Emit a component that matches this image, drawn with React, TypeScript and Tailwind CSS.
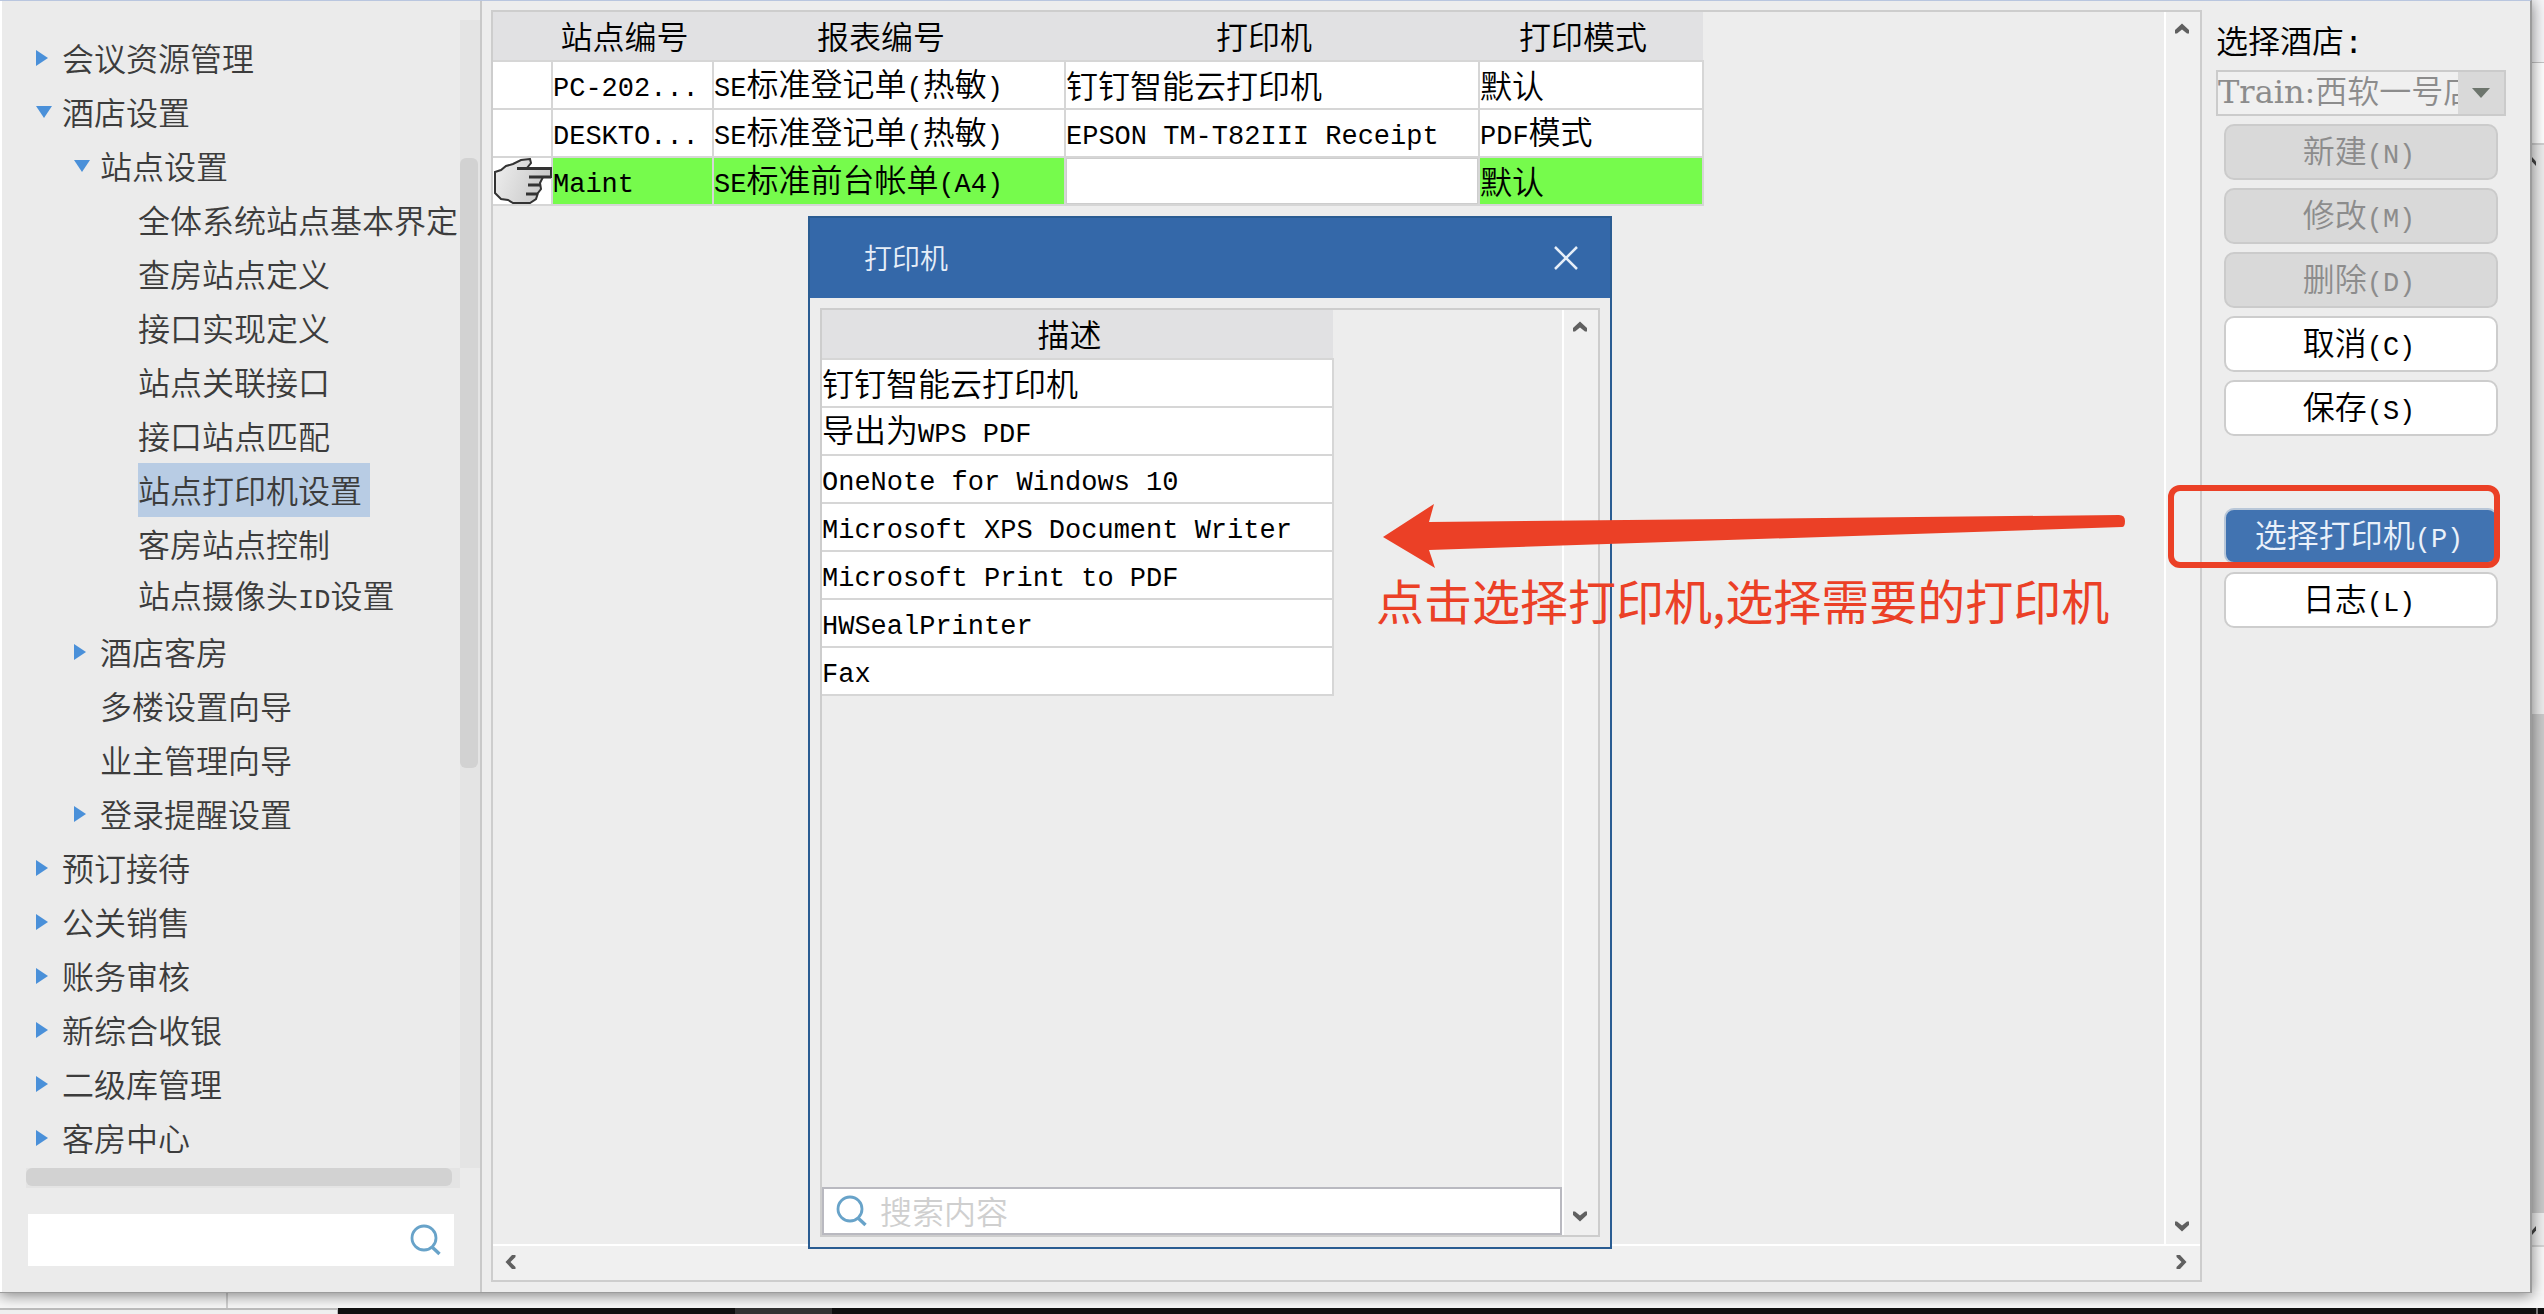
import { useState } from "react";
import type { ReactNode } from "react";

type Node = { label: string; level: 0 | 1 | 2; state?: "open" | "closed" };

const tree: Node[] = [
  { label: "会议资源管理", level: 0, state: "closed" },
  { label: "酒店设置", level: 0, state: "open" },
  { label: "站点设置", level: 1, state: "open" },
  { label: "全体系统站点基本界定", level: 2 },
  { label: "查房站点定义", level: 2 },
  { label: "接口实现定义", level: 2 },
  { label: "站点关联接口", level: 2 },
  { label: "接口站点匹配", level: 2 },
  { label: "站点打印机设置", level: 2 },
  { label: "客房站点控制", level: 2 },
  { label: "站点摄像头ID设置", level: 2 },
  { label: "酒店客房", level: 1, state: "closed" },
  { label: "多楼设置向导", level: 1 },
  { label: "业主管理向导", level: 1 },
  { label: "登录提醒设置", level: 1, state: "closed" },
  { label: "预订接待", level: 0, state: "closed" },
  { label: "公关销售", level: 0, state: "closed" },
  { label: "账务审核", level: 0, state: "closed" },
  { label: "新综合收银", level: 0, state: "closed" },
  { label: "二级库管理", level: 0, state: "closed" },
  { label: "客房中心", level: 0, state: "closed" },
];

const indent = { 0: "pl-[34px]", 1: "pl-[72px]", 2: "pl-[136px]" };

const rows = [
  ["PC-202...", "SE标准登记单(热敏)", "钉钉智能云打印机", "默认"],
  ["DESKTO...", "SE标准登记单(热敏)", "EPSON TM-T82III Receipt", "PDF模式"],
];

const printers = [
  "钉钉智能云打印机",
  "导出为WPS PDF",
  "OneNote for Windows 10",
  "Microsoft XPS Document Writer",
  "Microsoft Print to PDF",
  "HWSealPrinter",
  "Fax",
];

// Latin runs are set in a half-width mono face, Chinese at full size
function Mixed({ children }: { children: string }) {
  return (
    <>
      {children.split(/([\x20-\x7e]+)/).map((part, i) =>
        i % 2 ? (
          <span key={i} className="font-['Liberation_Mono',monospace] text-[27px]">
            {part}
          </span>
        ) : (
          part
        )
      )}
    </>
  );
}

function TreeArrow({ state }: { state?: "open" | "closed" }) {
  return (
    <svg className="w-[26px] h-4 shrink-0" viewBox="0 0 26 16" fill="#4a90d9">
      {state === "open" && <path d="M0 2h16L8 14z" />}
      {state === "closed" && <path d="M0 0v16l12-8z" />}
    </svg>
  );
}

function Chevron({ dir }: { dir: "up" | "down" | "left" | "right" }) {
  const d = {
    up: "M1 11.500V8l7-6.500 7 6.500v3.500h-2L8 7.500 3 11.500z",
    down: "M1 2.500V6l7 6.500L15 6V2.500h-2L8 6.500 3 2.500z",
    left: "M12.500 1H9L2.500 8 9 15h3.500v-2L7.500 8l5-5z",
    right: "M2.500 1H6l6.500 7L6 15H2.500v-2l5-5-5-5z",
  }[dir];
  return (
    <svg className="size-4" viewBox="0 0 16 16" fill="#606060">
      <path d={d} />
    </svg>
  );
}

function SearchIcon() {
  return (
    <svg className="size-8 shrink-0" viewBox="0 0 32 32" fill="none" stroke="#68a3c9" strokeWidth="2.800">
      <circle cx="14" cy="14" r="12" />
      <path d="M21.500 22.500l8 7.500" strokeWidth="3.400" />
    </svg>
  );
}

function HandIcon() {
  return (
    <svg className="block w-[60px] h-[46px]" viewBox="0 0 60 46">
      <defs>
        <linearGradient id="hand" x1="0" y1="0" x2="1" y2="0.300">
          <stop offset="0" stopColor="#efefef" />
          <stop offset="1" stopColor="#c9c9c9" />
        </linearGradient>
      </defs>
      <path
        d="M2 14l6-2 5-4 7-2 8-4 9-1 1 4-4 5h24v9h-8l-3 6 1 6-3 4-2 6-6 4H20l-5-3-7-1-6-6z"
        fill="url(#hand)"
        stroke="#333"
        strokeWidth="2"
      />
      <path d="M24 10.500h35M36 19h22M35 27h13M33 36h12" fill="none" stroke="#333" strokeWidth="3" />
    </svg>
  );
}

function SideButton({
  children,
  disabled,
  active,
}: {
  children: string;
  disabled?: boolean;
  active?: boolean;
}) {
  const tone = disabled
    ? "bg-[#d9d9d9] text-[#8c8c8c] border-[#cbcbcb]"
    : active
      ? "bg-[#4173b1] text-[#eaf1fa] border-[#b9c7d8]"
      : "bg-white text-black border-[#cdcdcd]";
  return (
    <button
      disabled={disabled}
      className={`h-14 mx-2 pr-1 pb-[2px] rounded-[10px] border-2 leading-none whitespace-nowrap ${tone}`}
    >
      <Mixed>{children}</Mixed>
    </button>
  );
}

function Cell({ children, className = "" }: { children?: ReactNode; className?: string }) {
  return (
    <td className={`h-12 p-0 border-2 border-[#d6d6d6] whitespace-nowrap leading-none ${className}`}>
      {children}
    </td>
  );
}

function Sidebar() {
  const [selected, setSelected] = useState("站点打印机设置");
  return (
    <aside className="w-[482px] shrink-0 flex flex-col bg-[#ebebeb] border-l-2 border-l-white border-r-2 border-r-[#c9c9c9] text-[#3c3c3c]">
      <div className="flex flex-1 min-h-0 pt-[19px]">
        <ul className="flex-1 pt-[11px] min-w-0">
          {tree.map((n) => (
            <li key={n.label} className={`flex items-center h-[54px] ${indent[n.level]}`}>
              {n.level < 2 && <TreeArrow state={n.state} />}
              <button
                onClick={() => setSelected(n.label)}
                className={`h-[54px] pb-[3px] whitespace-nowrap leading-none ${
                  selected === n.label ? "bg-[#b8cce4] pr-2" : ""
                }`}
              >
                <Mixed>{n.label}</Mixed>
              </button>
            </li>
          ))}
        </ul>
        <div className="w-5 bg-[#e4e4e4] pt-[138px]">
          <div className="w-[18px] h-[610px] rounded-md bg-[#d2d2d2]" />
        </div>
      </div>
      <div className="ml-6 mr-5 h-5 bg-[#e4e4e4]">
        <div className="w-[426px] h-[18px] rounded-md bg-[#d2d2d2]" />
      </div>
      <label className="flex items-center bg-white ml-[26px] mr-[26px] mt-[26px] mb-[26px] h-[52px] pr-3">
        <input aria-label="搜索" className="flex-1 min-w-0 h-full px-2 outline-none" />
        <SearchIcon />
      </label>
    </aside>
  );
}

function PrinterDialog() {
  return (
    <section className="absolute left-[808px] top-[215px] w-[804px] h-[1033px] flex flex-col bg-[#ededed] border-2 border-[#2a5c92]">
      <header className="flex items-center justify-between h-20 shrink-0 pl-[54px] pr-8 bg-[#3468a9] text-[#e6eef8]">
        <h2 className="text-[28px] leading-none pb-[2px]">打印机</h2>
        <button aria-label="关闭">
          <svg className="size-6" viewBox="0 0 24 24" stroke="#e6eef8" strokeWidth="2.500">
            <path d="M1 1l22 22M23 1L1 23" />
          </svg>
        </button>
      </header>
      <div className="flex flex-1 min-h-0 m-[10px] border-2 border-[#cdcdcd]">
        <div className="flex-1 flex flex-col justify-between">
          <table className="w-[512px] border-collapse table-fixed">
            <thead>
              <tr>
                <th className="h-[49px] p-0 pr-4 pb-[2px] bg-[#e1e1e3] font-[350] leading-none">描述</th>
              </tr>
            </thead>
            <tbody className="bg-white">
              {printers.map((p) => (
                <tr key={p}>
                  <Cell className="border-l-0 pb-[2px]">
                    <Mixed>{p}</Mixed>
                  </Cell>
                </tr>
              ))}
            </tbody>
          </table>
          <label className="flex items-center gap-3 h-12 pl-3 bg-white border-2 border-[#b9b9c0]">
            <SearchIcon />
            <input
              aria-label="搜索内容"
              placeholder="搜索内容"
              className="flex-1 outline-none h-full pb-[2px] leading-none placeholder:text-[#cfcfcf]"
            />
          </label>
        </div>
        <div className="w-9 flex flex-col items-center justify-between pt-[10px] pb-[10px] pr-[3px] border-l-2 border-white bg-[#f0f0f0]">
          <Chevron dir="up" />
          <Chevron dir="down" />
        </div>
      </div>
    </section>
  );
}

function StationGrid() {
  return (
    <main className="flex-1 min-w-0 flex flex-col border-2 border-[#cdcdcd] mt-[9px] mb-[10px] ml-[9px]">
      <div className="flex flex-1 min-h-0">
        <div className="flex-1">
          <table className="w-[1210px] border-collapse table-fixed">
            <colgroup>
              <col className="w-[59px]" />
              <col className="w-[161px]" />
              <col className="w-[352px]" />
              <col className="w-[414px]" />
              <col className="w-[224px]" />
            </colgroup>
            <thead className="bg-[#e1e1e3]">
              <tr>
                {["", "站点编号", "报表编号", "打印机", "打印模式"].map((h) => (
                  <th key={h} className="h-[49px] p-0 pr-4 pb-[2px] font-[350] leading-none">
                    {h}
                  </th>
                ))}
              </tr>
            </thead>
            <tbody>
              {rows.map((r) => (
                <tr key={r[0]} className="bg-white">
                  <Cell className="border-l-0" />
                  {r.map((c) => (
                    <Cell key={c} className="pb-[2px]">
                      <Mixed>{c}</Mixed>
                    </Cell>
                  ))}
                </tr>
              ))}
              <tr className="bg-[#76fb4c]">
                <Cell className="bg-white border-l-0">
                  <HandIcon />
                </Cell>
                <Cell className="pb-[2px]">
                  <Mixed>Maint</Mixed>
                </Cell>
                <Cell className="pb-[2px]">
                  <Mixed>SE标准前台帐单(A4)</Mixed>
                </Cell>
                <Cell>
                  <input
                    aria-label="打印机"
                    className="block w-full h-[46px] bg-white border border-[#cdcdcd] outline-none"
                  />
                </Cell>
                <Cell className="pb-[2px]">默认</Cell>
              </tr>
            </tbody>
          </table>
        </div>
        <div className="w-9 flex flex-col items-center justify-between pt-[10px] pb-[9px] pr-[2px] border-l-2 border-white bg-[#f0f0f0]">
          <Chevron dir="up" />
          <Chevron dir="down" />
        </div>
      </div>
      <div className="h-9 flex items-center justify-between px-[10px] pb-[2px] border-t-2 border-white bg-[#f0f0f0]">
        <Chevron dir="left" />
        <Chevron dir="right" />
      </div>
    </main>
  );
}

function Actions() {
  return (
    <div className="w-[328px] shrink-0 flex flex-col pl-[14px] pr-6 pt-[22px]">
      <label htmlFor="hotel" className="leading-none pb-[9px]">
        选择酒店<span className="font-['Liberation_Mono',monospace]">:</span>
      </label>
      <div className="flex h-[46px] mb-2 text-[#8c8c8c] border-2 border-[#cbcbcb]">
        <select
          id="hotel"
          disabled
          className="flex-1 min-w-0 pb-[2px] appearance-none opacity-100 leading-none bg-[#f0f0f0] font-['DejaVu_Serif','Noto_Sans_CJK_SC',serif]"
        >
          <option>Train:西软一号店</option>
        </select>
        <span className="w-[46px] flex items-center justify-center bg-[#d9d9d9]">
          <svg className="w-[18px] h-[10px]" viewBox="0 0 18 10" fill="#6d756d">
            <path d="M0 0h18L9 10z" />
          </svg>
        </span>
      </div>
      <div className="flex flex-col gap-2">
        <SideButton disabled>新建(N)</SideButton>
        <SideButton disabled>修改(M)</SideButton>
        <SideButton disabled>删除(D)</SideButton>
        <SideButton>取消(C)</SideButton>
        <SideButton>保存(S)</SideButton>
      </div>
      <div className="flex flex-col gap-2 mt-[72px]">
        <SideButton active>选择打印机(P)</SideButton>
        <SideButton>日志(L)</SideButton>
      </div>
    </div>
  );
}

function Annotation() {
  return (
    <>
      <svg className="absolute left-[1380px] top-[500px] w-[750px] h-[70px]" viewBox="0 0 750 70" fill="#eb4026">
        <path d="M3 36L54 3l-5 18 690-7q6 0 6 6t-3 6L49 49l6 18z" />
      </svg>
      <p className="absolute left-[1376px] top-[571px] text-[48px] leading-[54px] font-normal whitespace-nowrap text-[#eb4026]">
        点击选择打印机,选择需要的打印机
      </p>
      <div className="absolute left-[2168px] top-[484px] w-[332px] h-[83px] rounded-[12px] border-[6px] border-[#eb4026]" />
    </>
  );
}

export default function App() {
  return (
    <div className="h-screen overflow-hidden flex flex-col bg-[#f8f8f8] text-[32px] text-black font-['Noto_Sans_CJK_SC',sans-serif] font-[350]">
      <div className="flex flex-1 min-h-0">
        <div className="relative z-10 flex flex-1 min-w-0 bg-[#ededed] border-t border-t-[#b9c6df] border-r-2 border-r-[#9c9c9c] border-b border-b-[#9c9c9c] shadow-[0_2px_14px_rgba(0,0,0,0.5)]">
          <Sidebar />
          <StationGrid />
          <Actions />
          <PrinterDialog />
          <Annotation />
        </div>
        {/* the window behind */}
        <div className="w-3 shrink-0 flex flex-col">
          <div className="h-[63px] bg-[#f6f6f8] border-b border-[#c4c4c4]" />
          <div className="h-[82px] bg-white border-b-2 border-[#d0d0d0]" />
          <div className="h-[569px] pt-3 bg-[#ededed]">
            <svg className="block w-1 h-3" viewBox="0 0 4 12" stroke="#444" strokeWidth="3">
              <path d="M-2 0l8 9" />
            </svg>
          </div>
          <div className="flex-1 bg-[#cbcbcb]" />
          <div className="h-[34px] pt-3 bg-[#f0f0f0] border-b-2 border-[#d6d6d6]">
            <svg className="block w-1 h-3" viewBox="0 0 4 12" stroke="#444" strokeWidth="3">
              <path d="M-2 10l8-9" />
            </svg>
          </div>
          <div className="h-[46px] bg-[#fafafa]" />
        </div>
      </div>
      <div className="flex h-[15px] shrink-0">
        <div className="w-[228px] border-r-2 border-[#d0d0d0]" />
      </div>
      <footer className="flex h-[6px] shrink-0 bg-[#101010]">
        <div className="w-[338px] bg-[#f0f0f0] border-t-2 border-r border-[#bdbdbd]" />
        <div className="w-[397px]" />
        <div className="w-[97px] bg-[#333]" />
        <div className="flex-1" />
        <div className="w-2 border-l-2 border-[#777]" />
      </footer>
    </div>
  );
}
